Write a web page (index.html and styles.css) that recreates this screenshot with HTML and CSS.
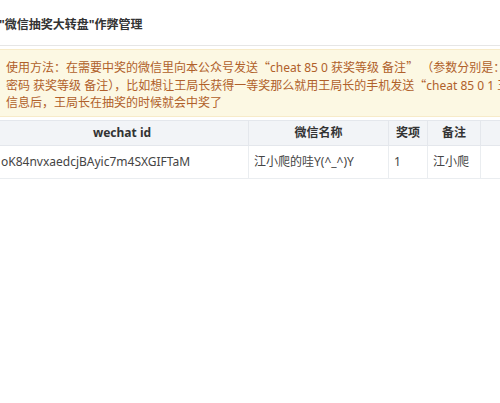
FILE: index.html
```html
<!DOCTYPE html>
<html lang="zh-CN">
<head>
<meta charset="utf-8">
<title>作弊管理</title>
<link rel="stylesheet" href="styles.css">
</head>
<body>
<div class="page">
  <div class="title">"微信抽奖大转盘"作弊管理</div>
  <div class="alert">
    使用方法：在需要中奖的微信里向本公众号发送<span class="q">“</span>cheat 85 0 获奖等级 备注<span class="q">”</span> （参数分别是：作弊指令 作弊<br>
    密码 获奖等级 备注），比如想让王局长获得一等奖那么就用王局长的手机发送<span class="q">“</span>cheat 85 0 1 王局长<span class="q">”</span>这条<br>
    信息后，王局长在抽奖的时候就会中奖了
  </div>
  <table class="grid">
    <colgroup>
      <col class="c1"><col class="c2"><col class="c3"><col class="c4"><col class="c5">
    </colgroup>
    <thead>
      <tr><th>wechat id</th><th>微信名称</th><th>奖项</th><th>备注</th><th></th></tr>
    </thead>
    <tbody>
      <tr><td>oK84nvxaedcjBAyic7m4SXGIFTaM</td><td>江小爬的哇Y(^_^)Y</td><td>1</td><td>江小爬</td><td></td></tr>
    </tbody>
  </table>
</div>
</body>
</html>
```

FILE: styles.css
```css
html, body {
  margin: 0;
  padding: 0;
  background: #ffffff;
  overflow: hidden;
}
body {
  font-family: "Noto Sans", "Noto Sans CJK SC", sans-serif;
  font-size: 12px;
  color: #333;
}
.page {
  margin-left: -5px;
  width: 720px;
}
.title {
  padding: 17px 0 12px 4px;
  line-height: 16px;
  font-weight: bold;
  color: #333;
  border-bottom: 1px solid #e6e6e6;
  white-space: nowrap;
}
.alert {
  margin-top: 3px;
  background: #fcf8e3;
  border: 1px solid #f7ebc9;
  color: #b0602a;
  padding: 8px 10px 5px 10px;
  line-height: 17px;
  white-space: nowrap;
  overflow: hidden;
}
.q {
  font-family: "Noto Sans CJK SC", sans-serif;
}
.grid {
  margin-top: 3px;
  border-collapse: collapse;
  table-layout: fixed;
  width: 560px;
}
.c1 { width: 253px; }
.c2 { width: 140px; }
.c3 { width: 39px; }
.c4 { width: 53px; }
.c5 { width: 75px; }
.grid th {
  background: #f2f4f7;
  font-weight: bold;
  color: #333;
  height: 24px;
  padding: 0 5px;
  border: 1px solid #e4e7ec;
  text-align: center;
  line-height: 16px;
}
.grid td {
  height: 32px;
  padding: 0 4px 0 5px;
  border: 1px solid #eaedf0;
  color: #444;
  line-height: 16px;
  white-space: nowrap;
  overflow: hidden;
}
```
